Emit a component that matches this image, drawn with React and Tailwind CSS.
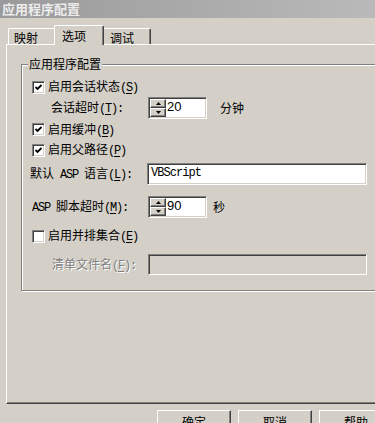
import React from 'react';

const sunken =
  'border border-t-[#808080] border-l-[#808080] border-r-white border-b-white shadow-[inset_1px_1px_0_#404040,inset_-1px_-1px_0_#d4d0c8]';
const raised =
  'bg-[#d4d0c8] border border-t-white border-l-white border-r-[#404040] border-b-[#404040] shadow-[inset_-1px_-1px_0_#808080]';

// half-width ascii, 6px per char like the old bitmap font
function Half({ children }) {
  return (
    <span className="font-['Liberation_Mono',monospace] text-[12px] tracking-[-1.2px] whitespace-pre">{children}</span>
  );
}

function Key({ k, colon }) {
  return (
    <Half>
      (<span className="underline underline-offset-2">{k}</span>){colon ? ':' : ''}
    </Half>
  );
}

function Check({ checked }) {
  return (
    <span className={`w-[13px] h-[13px] shrink-0 bg-white flex items-center justify-center ${sunken}`}>
      {checked && (
        <svg width="9" height="9" viewBox="0 0 9 9">
          <polyline points="1.5,4 3.5,6 7.5,2" fill="none" stroke="#000" strokeWidth="1.8" />
        </svg>
      )}
    </span>
  );
}

function SpinBtn({ up }) {
  return (
    <div className={`h-[9px] w-[16px] flex items-center justify-center ${raised}`}>
      <svg width="5" height="3" viewBox="0 0 5 3">
        {up ? <polygon points="2.5,0 5,3 0,3" fill="#000" /> : <polygon points="0,0 5,0 2.5,3" fill="#000" />}
      </svg>
    </div>
  );
}

function Spin({ value }) {
  return (
    <div className={`w-[59px] h-[22px] shrink-0 bg-white flex pt-[1px] pl-[1px] ${sunken}`}>
      <div className="flex flex-col w-[16px]">
        <SpinBtn up />
        <SpinBtn />
      </div>
      <span className="pl-[1px] pt-[1px] text-[13px] leading-[14px] font-['Liberation_Sans',sans-serif]">{value}</span>
    </div>
  );
}

function CheckRow({ checked, label, k, h }) {
  return (
    <div className={`flex items-center ${h}`}>
      <Check checked={checked} />
      <span className="ml-[3px]">
        {label}
        <Key k={k} />
      </span>
    </div>
  );
}

export default function App() {
  return (
    <div className="w-[375px] h-[423px] overflow-hidden bg-[#d4d0c8] text-black text-[12px] leading-[14px] font-['Noto_Sans_CJK_SC',sans-serif]">
      {/* title bar */}
      <div className="h-[18px] bg-linear-to-r from-[#9a9a9a] to-[#bababa] pl-[2px] flex items-center text-[13px] font-bold text-[#ececec]">
        应用程序配置
      </div>

      {/* tabs */}
      <div className="relative z-10 mt-[7px] ml-[8px] h-[19px] flex items-end">
        <div className="h-[16px] w-[46px] pl-[5px] pt-[2px] border-l border-t border-white rounded-tl-[2px]">映射</div>
        <div className="h-[20px] w-[50px] -mb-px pl-[7px] pt-[3px] bg-[#d4d0c8] border-l border-t border-r border-t-white border-l-white border-r-[#404040] shadow-[inset_-1px_0_0_#808080] rounded-t-[2px]">
          选项
        </div>
        <div className="h-[16px] w-[47px] pl-[6px] pt-[2px] border-t border-r border-t-white border-r-[#404040] shadow-[inset_-1px_0_0_#808080] rounded-tr-[2px]">
          调试
        </div>
      </div>

      {/* tab panel */}
      <div className="ml-[6px] w-[420px] h-[360px] border-l border-t border-b border-l-white border-t-white border-b-[#404040] shadow-[inset_0_-1px_0_#808080]">
        {/* group box */}
        <div className="relative mt-[19px] ml-[14px] w-[420px] h-[227px] border border-[#808080] shadow-[inset_1px_1px_0_#fff,1px_1px_0_#fff] pt-[12px] pl-[10px]">
          <span className="absolute left-[6px] -top-[8px] px-[1px] bg-[#d4d0c8]">应用程序配置</span>

          <CheckRow checked label="启用会话状态" k="S" h="h-[20px]" />

          <div className="flex items-center h-[22px]">
            <span className="w-[116px] pl-[19px]">
              会话超时
              <Key k="T" colon />
            </span>
            <Spin value="20" />
            <span className="ml-[13px]">分钟</span>
          </div>

          <CheckRow checked label="启用缓冲" k="B" h="h-[21px]" />
          <CheckRow checked label="启用父路径" k="P" h="h-[20px]" />

          <div className="flex items-center h-[22px] mt-[3px]">
            <span className="w-[117px] -ml-[2px]">
              默认<Half> ASP </Half>语言
              <Key k="L" colon />
            </span>
            <div className={`w-[220px] h-[22px] shrink-0 bg-white pl-[3px] pt-[2px] text-[12px] tracking-[-0.95px] leading-[14px] font-['Liberation_Mono',monospace] ${sunken}`}>
              VBScript
            </div>
          </div>

          <div className="flex items-center h-[22px] mt-[11px]">
            <span className="w-[116px]">
              <Half>ASP </Half>脚本超时
              <Key k="M" colon />
            </span>
            <Spin value="90" />
            <span className="ml-[6px]">秒</span>
          </div>

          <div className="mt-[8px]">
            <CheckRow label="启用并排集合" k="E" h="h-[20px]" />
          </div>

          <div className="flex items-center h-[21px] mt-[8px]">
            <span className="w-[116px] pl-[20px] text-[#808080] [text-shadow:1px_1px_0_#fff]">
              清单文件名
              <Key k="F" colon />
            </span>
            <div className={`w-[219px] h-[21px] shrink-0 bg-[#d4d0c8] ${sunken}`} />
          </div>
        </div>
      </div>

      {/* dialog buttons */}
      <div className="mt-[6px] pl-[157px] flex gap-[7px]">
        {['确定', '取消', '帮助'].map((t) => (
          <div key={t} className={`w-[74px] h-[23px] shrink-0 flex items-center justify-center ${raised}`}>
            {t}
          </div>
        ))}
      </div>
    </div>
  );
}
